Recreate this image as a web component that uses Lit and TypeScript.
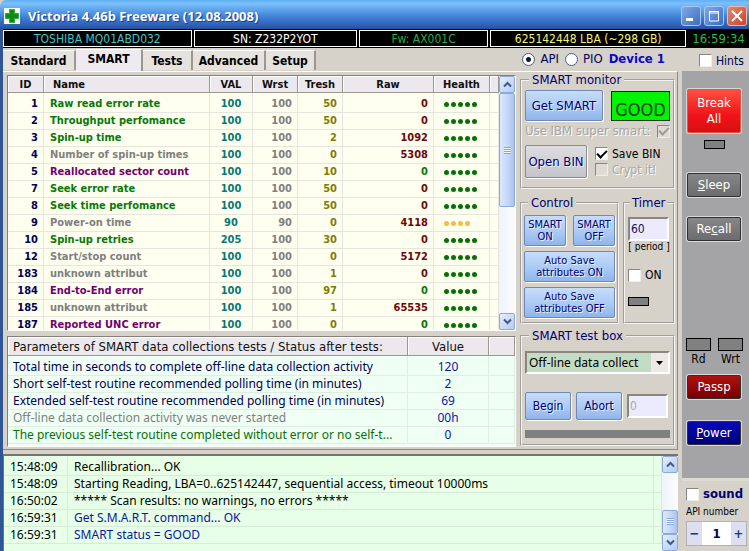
import { LitElement, html, css, svg } from "lit";
import { customElement, property, state } from "lit/decorators.js";
import { classMap } from "lit/directives/class-map.js";

type Tone = "ok" | "info" | "crit";
interface Attr {
  id: number;
  name: string;
  tone: Tone;
  val: number;
  wrst: number;
  tresh: number;
  raw: number;
  calm?: boolean;
  health: number;
}

const a = (id: number, name: string, tone: Tone, val: number, wrst: number, tresh: number, raw: number, calm = false, health = 5): Attr =>
  ({ id, name, tone, val, wrst, tresh, raw, calm, health });

const ATTRS: Attr[] = [
  a(1, "Raw read error rate", "ok", 100, 100, 50, 0),
  a(2, "Throughput perfomance", "ok", 100, 100, 50, 0),
  a(3, "Spin-up time", "ok", 100, 100, 2, 1092),
  a(4, "Number of spin-up times", "info", 100, 100, 0, 5308),
  a(5, "Reallocated sector count", "crit", 100, 100, 10, 0, true),
  a(7, "Seek error rate", "ok", 100, 100, 50, 0),
  a(8, "Seek time perfomance", "ok", 100, 100, 50, 0),
  a(9, "Power-on time", "info", 90, 90, 0, 4118, false, 4),
  a(10, "Spin-up retries", "ok", 205, 100, 30, 0),
  a(12, "Start/stop count", "info", 100, 100, 0, 5172),
  a(183, "unknown attribut", "info", 100, 100, 1, 0),
  a(184, "End-to-End error", "crit", 100, 100, 97, 0, true),
  a(185, "unknown attribut", "info", 100, 100, 1, 65535),
  a(187, "Reported UNC error", "crit", 100, 100, 0, 0, true),
];

const PARAMS = [
  { text: "Total time in seconds to complete off-line data collection activity", value: "120", tone: "navy" },
  { text: "Short self-test routine recommended polling time (in minutes)", value: "2", tone: "navy" },
  { text: "Extended self-test routine recommended polling time (in minutes)", value: "69", tone: "navy" },
  { text: "Off-line data collection activity was never started", value: "00h", tone: "grey" },
  { text: "The previous self-test routine completed without error or no self-t...", value: "0", tone: "green" },
];

const LOG = [
  { time: "15:48:09", text: "Recallibration... OK", note: false },
  { time: "15:48:09", text: "Starting Reading, LBA=0..625142447, sequential access, timeout 10000ms", note: false },
  { time: "16:50:02", text: "***** Scan results: no warnings, no errors *****", note: false },
  { time: "16:59:31", text: "Get S.M.A.R.T. command... OK", note: true },
  { time: "16:59:31", text: "SMART status = GOOD", note: true },
];

const reset = css`
  * { box-sizing: border-box; }
  button, input, select { font: inherit; margin: 0; padding: 0; border-radius: 0; }
`;

@customElement("xp-scrollbar")
class XpScrollbar extends LitElement {
  @property({ type: Number }) before = 0;
  @property({ type: Number }) size = 1;
  @property({ type: Number }) after = 0;

  static styles = [reset, css`
    :host { display: flex; flex-direction: column; width: 16px; background: linear-gradient(90deg, #eef3fd, #fbfcff); }
    .arrow {
      flex: none; display: grid; place-items: center; width: 16px; height: 17px;
      border: 1px solid #8ea9d6; border-radius: 2px;
      background: linear-gradient(135deg, #e4eefd, #b4cbf4);
    }
    .track { flex: 1; min-height: 0; display: flex; flex-direction: column; }
    .thumb {
      display: grid; place-items: center; min-height: 16px;
      border: 1px solid #8ea9d6; border-radius: 2px;
      background: linear-gradient(90deg, #dbe8fd, #c3d6f9 60%, #a9c2f0);
    }
    .grip { width: 7px; height: 7px; background: repeating-linear-gradient(#8ba6d8 0 1px, #eef4ff 1px 2px); }
  `];

  render() {
    const arrow = (d: string) => svg`<path d=${d} fill="none" stroke="#3f5a8c" stroke-width="2" />`;
    return html`
      <button class="arrow" aria-label="Scroll up"><svg width="9" height="7" viewBox="0 0 9 7">${arrow("M1 5.5 4.5 2 8 5.5")}</svg></button>
      <div class="track">
        <div style="flex:${this.before} 1 0"></div>
        <div class="thumb" style="flex:${this.size} 1 0"><span class="grip"></span></div>
        <div style="flex:${this.after} 1 0"></div>
      </div>
      <button class="arrow" aria-label="Scroll down"><svg width="9" height="7" viewBox="0 0 9 7">${arrow("M1 1.5 4.5 5 8 1.5")}</svg></button>
    `;
  }
}

@customElement("app-root")
class AppRoot extends LitElement {
  @state() private tab = "SMART";

  static styles = [reset, css`
    :host {
      display: flex; flex-direction: column; min-width: 700px; height: 100vh; min-height: 551px; overflow: hidden;
      background: #d6d2ca; color: #000;
      font-family: "DejaVu Sans Condensed", "DejaVu Sans", sans-serif; font-size: 12px; line-height: 16px;
    }

    .titlebar {
      flex: none; display: flex; align-items: center; gap: 8px; height: 29px; padding: 2px 2px 0 4px;
      background: linear-gradient(#5fb0f4, #7cc0fa 12%, #62a8ee 30%, #3f7fd4 60%, #2f62b8 85%, #274f9c);
      color: #fff; border-radius: 6px 0 0 0;
    }
    .logo { display: block; }
    .title { flex: 1; margin: 0; font: 700 13px/20px "Noto Sans", sans-serif; text-shadow: 1px 1px #1c3f86; white-space: nowrap; }
    .winbtns { display: flex; gap: 3px; }
    .winbtn {
      display: grid; place-items: center; width: 20px; height: 20px; border: 1px solid #a9c8f2; border-radius: 3px;
      background: linear-gradient(135deg, #7fa9e8, #3b6cc4);
    }
    .winbtn.close { border-color: #f0b9a8; background: linear-gradient(135deg, #e08a72, #c9432a); }

    .window { flex: 1; min-height: 0; display: flex; flex-direction: column; border-left: 3px solid #2f5596; }

    .strip { flex: none; display: flex; gap: 2px; height: 19px; padding: 1px 0; background: #000; }
    .cell { border: 1px solid #fff; text-align: center; line-height: 16px; white-space: nowrap; }
    .model { flex: 189 1 0; color: #46c3c3; }
    .serial { flex: 163 1 0; color: #fff; }
    .firmware { flex: 129 1 0; color: #2fa84a; }
    .size { flex: 196 1 0; color: #f2f27c; }
    .clock { flex: none; width: 61px; border-color: #000; color: #2fb84a; font-size: 13px; }

    .body { flex: 1; min-height: 0; display: flex; }
    .main { flex: 1; min-width: 0; display: flex; flex-direction: column; }

    .topline { flex: none; display: flex; align-items: flex-end; height: 23px; }
    .tab {
      height: 20px; border: 0; border-right: 2px solid #9b978f; background: #e6e2de; margin: 0 0 1px;
      font-weight: 700; font-size: 12px; line-height: 18px; text-align: center; border-top: 1px solid #fff;
    }
    .tab.on { height: 22px; margin: 0; line-height: 16px; padding-bottom: 4px; background: #efeaf0; }
    .w72 { width: 73px; }
    .w66 { width: 67px; }
    .w50 { width: 50px; }
    .port { flex: 1; display: flex; align-items: center; justify-content: flex-end; gap: 6px; height: 22px; padding: 0 13px 2px 0; color: #000058; }
    .port label { display: flex; align-items: center; gap: 5px; font-size: 13px; }
    .device { color: #0a0ac0; font-size: 13px; }
    input[type="radio"] {
      appearance: none; width: 13px; height: 13px; border: 1px solid #45618a; border-radius: 50%; background: #fff;
    }
    input[type="radio"]:checked { background: radial-gradient(#101840 0 2px, #fff 3px); }

    .page {
      flex: 1; min-height: 0; display: flex; gap: 4px; padding: 3px 2px 0 4px;
      border-top: 1px solid #fff; border-right: 1px solid #8d8a84; border-bottom: 1px solid #8d8a84;
    }
    .lists { flex: 1; min-width: 0; display: flex; flex-direction: column; gap: 5px; padding-bottom: 2px; }
    .inset { border: 1px solid #848078; border-right-color: #fff; border-bottom-color: #fff; overflow: hidden; }
    .attrs { flex: 1; min-height: 0; display: flex; background: #fffff0; }
    .attrs table { flex: 1; align-self: flex-start; }
    table { width: 100%; table-layout: fixed; border-collapse: separate; border-spacing: 0; }
    th {
      height: 17px; padding: 0; line-height: 15px; background: #ece9ee; border-right: 1px solid #9c9890;
      border-bottom: 1px solid #9c9890; box-shadow: inset 1px 1px #fff; text-align: center; color: #101010;
    }
    td { padding: 0; line-height: 16px; border-right: 1px solid #e6e6de; border-bottom: 1px solid #e6e6de; white-space: nowrap; overflow: hidden; }
    .attrs td { font-weight: 700; font-size: 11px; }
    .attrs th { font-size: 11px; }
    tbody tr:first-child td { padding-top: 3px; }
    .c-id { width: 36px; }
    .c-val { width: 43px; }
    .c-num { width: 45px; }
    .c-raw { width: 91px; }
    .c-health { width: 56px; }
    .c-pad { width: 9px; }
    .right { text-align: right; padding-right: 5px; }
    .center { text-align: center; }
    th.left { text-align: left; padding-left: 9px; }
    td.left { padding-left: 6px; }
    .id { color: #000058; }
    .ok { color: #087808; }
    .info, .grey { color: #808080; }
    .crit { color: #720072; }
    .val { color: #087878; }
    .tresh { color: #7c7c08; }
    .raw { color: #6c0808; }
    .raw.calm { color: #087808; }
    .dots { display: flex; gap: 2px; padding-left: 10px; }
    .dot { width: 5px; height: 5px; border-radius: 50%; background: #087008; }
    .warn .dot { background: #f8bc40; }

    .params { flex: none; padding-bottom: 2px; background: #f0fff4; }
    .params th { height: 19px; font-weight: 400; font-size: 13px; line-height: 17px; }
    .params td, .log td { font-family: "Noto Sans", sans-serif; font-size: 12px; }
    .params th.left, .params td.left { padding-left: 5px; }
    .params td { border-color: #dfeee4; }
    .c-value { width: 81px; }
    .c-tail { width: 26px; }
    .navy { color: #000050; }
    .num { color: #0818a0; }
    .green { color: #087008; }

    .controls { flex: none; width: 155px; display: flex; flex-direction: column; }
    fieldset { margin: 0; min-width: 0; border: 2px groove #f4f2ee; padding: 0 3px; }
    legend { padding: 0 3px; margin-left: 4px; color: #000070; font-size: 13px; line-height: 14px; }
    .row { display: flex; align-items: center; }
    .between { justify-content: space-between; }
    .btn {
      border: 1px solid #7089b4; border-radius: 2px; color: #000070;
      background: linear-gradient(#c6dcf9, #a8c8f4 60%, #90b4ea);
      box-shadow: 1px 1px #fff; text-shadow: 1px 1px #e8f2ff; white-space: nowrap;
    }
    .btn.plain { border-color: #8a8a90; background: linear-gradient(#dedde2, #c4c4ca); }
    .good {
      width: 59px; height: 30px; border: 1px solid #103010; background: #00f400; color: #003c10;
      font-size: 18px; line-height: 36px; text-align: center;
    }
    .monitor { height: 116px; margin-top: -2px; }
    .get { width: 78px; height: 31px; font-size: 13px; }
    .ibm { display: flex; align-items: center; justify-content: space-between; height: 20px; color: #a8a49c; text-shadow: 1px 1px #fff; font-size: 13px; white-space: nowrap; }
    .monitor .row.first { padding-top: 3px; }
    .openrow { gap: 8px; padding-top: 4px; }
    .open { width: 62px; height: 33px; font-size: 13px; }
    .checks { display: flex; flex-direction: column; }
    .check { display: flex; align-items: center; gap: 4px; font-size: 12px; white-space: nowrap; }
    .check.off { color: #aaa69e; text-shadow: 1px 1px #fff; }
    input[type="checkbox"] {
      appearance: none; flex: none; display: grid; place-items: center; width: 13px; height: 13px;
      background: #fff; border: 1px solid #8a867e; border-right-color: #f0eee8; border-bottom-color: #f0eee8;
    }
    input[type="checkbox"]:disabled { background: #dedad4; }
    input[type="checkbox"]:checked::after {
      content: ""; width: 8px; height: 4px; border: solid #000; border-width: 0 0 2px 2px; transform: translateY(-1px) rotate(-45deg);
    }
    input[type="checkbox"]:disabled:checked::after { border-color: #a09c94; }

    .pair { display: flex; gap: 4px; margin-top: 7px; }
    .control { flex: 1; height: 128px; padding: 0 2px; }
    .timer { flex: none; width: 52px; height: 128px; padding: 0 3px; }
    .timer legend { margin-left: 2px; padding: 0 2px; }
    .stack { display: flex; flex-direction: column; gap: 5px; padding-top: 5px; }
    .small { height: 31px; font-size: 11px; line-height: 12px; }
    .half { width: 42px; }
    .field {
      width: 41px; height: 24px; padding-left: 1px; border: 2px solid #8a867e; border-right-color: #fff; border-bottom-color: #fff;
      background: #ecebfd; color: #101060; font-size: 12px;
    }
    .field:disabled { color: #a8a8b8; }
    .tick { display: flex; flex-direction: column; padding-top: 7px; }
    .period { font-size: 10px; line-height: 12px; text-align: center; white-space: nowrap; }
    .tick .check { padding-top: 14px; }
    .led { width: 21px; height: 9px; border: 1px solid #000; background: #808080; }
    .tick .led { margin-top: 14px; }

    .test { height: 117px; margin-top: 5px; }
    .test select {
      appearance: none; display: block; width: 100%; height: 23px; padding: 0 18px 0 2px; font: 12px/16px "Noto Sans", sans-serif;
      border: 2px solid #8a867e; border-right-color: #fff; border-bottom-color: #fff; color: #000;
      background: linear-gradient(#ece9e4, #ece9e4) right / 17px 100% no-repeat #c4dcc4;
    }
    .combo { display: grid; margin-top: 8px; }
    .combo > * { grid-area: 1 / 1; }
    .combo svg { justify-self: end; align-self: center; margin-right: 7px; pointer-events: none; }
    .runrow { gap: 5px; padding-top: 18px; }
    .run { width: 46px; height: 28px; font-size: 12px; }
    .progress { height: 8px; margin-top: 10px; background: #808080; }

    .log { flex: none; display: flex; height: 97px; margin-top: 4px; background: #e6ffe6; border: solid #77746e; border-width: 2px 0 0 1px; overflow: hidden; }
    .log table { flex: 1; align-self: flex-start; }
    .log td { border-color: #d6ecd8; }
    .c-time { width: 64px; }
    .c-end { width: 8px; }
    .log .time { padding-left: 6px; }
    .log .note { color: #0818a0; }

    .side { flex: none; width: 70px; display: flex; flex-direction: column; margin-left: 1px; }
    .hints { height: 23px; padding: 2px 0 0 20px; font-size: 12px; color: #000058; }
    .rail { flex: 1; display: flex; flex-direction: column; align-items: flex-start; margin-left: 3px; padding: 18px 0 0 5px; background: #a4a4a6; }
    .key {
      width: 54px; height: 24px; border: 1px solid #303030; border-radius: 2px; color: #fff; box-shadow: 0 0 0 1px #d8d8d8;
      background: linear-gradient(#868688, #6c6c70); font-size: 13px;
    }
    .break { height: 44px; background: linear-gradient(#ff5040, #f01418 60%, #d81010); border-color: #e85048; line-height: 16px; }
    .beacon { margin: 7px 0 24px 17px; }
    .recall { margin: 20px 0 97px; }
    .lamps { display: flex; gap: 7px; margin-left: -1px; }
    .lamp { display: flex; flex-direction: column; align-items: center; width: 25px; font-size: 12px; line-height: 16px; }
    .lamp .led { width: 25px; height: 13px; }
    .pass { margin: 8px 0 22px; background: linear-gradient(#b01010, #780000); }
    .power { background: linear-gradient(#0808b8, #000078); }
    .api { flex: none; height: 73px; margin-left: 3px; padding: 5px 2px 0 4px; border-top: 3px solid #dedbd4; }
    .sound { font-weight: 700; font-size: 13px; color: #000070; }
    .apilabel { display: block; font-size: 10px; line-height: 16px; padding-top: 2px; white-space: nowrap; }
    .spin { display: flex; height: 25px; margin-top: 1px; border: 1px solid #b4b2b0; background: #fff; }
    .spin button { width: 15px; border: 0; background: #dcdff0; color: #103c80; font-weight: 700; font-size: 13px; }
    .spin input { flex: 1; width: 0; min-width: 0; border: 0; text-align: center; color: #000060; font-weight: 700; font-size: 13px; background: #fff; }
  `];

  private tabButton(name: string, width: string) {
    return html`<button role="tab" aria-selected=${this.tab === name}
      class=${classMap({ tab: true, on: this.tab === name, [width]: true })}
      @click=${() => (this.tab = name)}>${name}</button>`;
  }

  private attrRow(r: Attr) {
    return html`<tr>
      <td class="right id">${r.id}</td>
      <td class="left ${r.tone}">${r.name}</td>
      <td class="center val">${r.val}</td>
      <td class="right info">${r.wrst}</td>
      <td class="right tresh">${r.tresh}</td>
      <td class=${classMap({ right: true, raw: true, calm: !!r.calm })}>${r.raw}</td>
      <td><div class=${classMap({ dots: true, warn: r.health < 5 })}>${Array.from({ length: r.health }, () => html`<span class="dot"></span>`)}</div></td>
      <td></td>
    </tr>`;
  }

  render() {
    return html`
      <header class="titlebar">
        <svg class="logo" width="16" height="16" viewBox="0 0 16 16"><rect width="16" height="16" fill="#f4fbf0" /><path d="M5.5 1.5h5v4h4v5h-4v4h-5v-4h-4v-5h4z" fill="#0c8c14" stroke="#3aa83c" /></svg>
        <h1 class="title">Victoria 4.46b Freeware (12.08.2008)</h1>
        <div class="winbtns">
          <button class="winbtn" aria-label="Minimize"><svg width="12" height="12"><rect x="1" y="8" width="7" height="3" fill="#fff" /></svg></button>
          <button class="winbtn" aria-label="Maximize"><svg width="12" height="12"><path d="M1 1.5h10M1.5 1v10h9V1M1 3h10" fill="none" stroke="#fff" /></svg></button>
          <button class="winbtn close" aria-label="Close"><svg width="12" height="12"><path d="M1 1l10 10M11 1 1 11" stroke="#fff" stroke-width="2" /></svg></button>
        </div>
      </header>
      <div class="window">
        <div class="strip">
          <div class="cell model">TOSHIBA MQ01ABD032</div>
          <div class="cell serial">SN: Z232P2YOT</div>
          <div class="cell firmware">Fw: AX001C</div>
          <div class="cell size">625142448 LBA (~298 GB)</div>
          <div class="cell clock">16:59:34</div>
        </div>
        <div class="body">
          <main class="main">
            <div class="topline" role="tablist">
              ${this.tabButton("Standard", "w72")}
              ${this.tabButton("SMART", "w66")}
              ${this.tabButton("Tests", "w50")}
              ${this.tabButton("Advanced", "w72")}
              ${this.tabButton("Setup", "w50")}
              <div class="port">
                <label><input type="radio" name="port" checked />API</label>
                <label><input type="radio" name="port" />PIO</label>
                <strong class="device">Device 1</strong>
              </div>
            </div>
            <section class="page">
              <div class="lists">
                <div class="inset attrs">
                  <table>
                    <colgroup>
                      <col class="c-id" /><col /><col class="c-val" /><col class="c-num" /><col class="c-num" />
                      <col class="c-raw" /><col class="c-health" /><col class="c-pad" />
                    </colgroup>
                    <thead><tr><th>ID</th><th class="left">Name</th><th>VAL</th><th>Wrst</th><th>Tresh</th><th>Raw</th><th>Health</th><th></th></tr></thead>
                    <tbody>${ATTRS.map((r) => this.attrRow(r))}</tbody>
                  </table>
                  <xp-scrollbar .before=${0} .size=${114} .after=${107}></xp-scrollbar>
                </div>
                <div class="inset params">
                  <table>
                    <colgroup><col /><col class="c-value" /><col class="c-tail" /></colgroup>
                    <thead><tr><th class="left">Parameters of SMART data collections tests / Status after tests:</th><th>Value</th><th></th></tr></thead>
                    <tbody>${PARAMS.map((p) => html`<tr><td class="left ${p.tone}">${p.text}</td><td class="center num">${p.value}</td><td></td></tr>`)}</tbody>
                  </table>
                </div>
              </div>
              <div class="controls">
                <fieldset class="monitor">
                  <legend>SMART monitor</legend>
                  <div class="row between first"><button class="btn get">Get SMART</button><output class="good">GOOD</output></div>
                  <label class="ibm">Use IBM super smart:<input type="checkbox" checked disabled /></label>
                  <div class="row openrow">
                    <button class="btn plain open">Open BIN</button>
                    <div class="checks">
                      <label class="check"><input type="checkbox" checked />Save BIN</label>
                      <label class="check off"><input type="checkbox" disabled />Crypt it!</label>
                    </div>
                  </div>
                </fieldset>
                <div class="pair">
                  <fieldset class="control">
                    <legend>Control</legend>
                    <div class="stack">
                      <div class="row between"><button class="btn small half">SMART<br />ON</button><button class="btn small half">SMART<br />OFF</button></div>
                      <button class="btn small">Auto Save<br />attributes ON</button>
                      <button class="btn small">Auto Save<br />attributes OFF</button>
                    </div>
                  </fieldset>
                  <fieldset class="timer">
                    <legend>Timer</legend>
                    <div class="tick">
                      <input class="field" id="period" value="60" />
                      <label class="period" for="period">[ period ]</label>
                      <label class="check"><input type="checkbox" />ON</label>
                      <span class="led"></span>
                    </div>
                  </fieldset>
                </div>
                <fieldset class="test">
                  <legend>SMART test box</legend>
                  <div class="combo">
                    <select aria-label="Test"><option>Off-line data collect</option></select>
                    <svg width="7" height="4" viewBox="0 0 7 4"><path d="M0 0h7L3.500 4z" /></svg>
                  </div>
                  <div class="row runrow">
                    <button class="btn run">Begin</button>
                    <button class="btn run">Abort</button>
                    <input class="field" value="0" aria-label="Result" disabled />
                  </div>
                  <div class="progress"></div>
                </fieldset>
              </div>
            </section>
            <div class="log">
              <table>
                <colgroup><col class="c-time" /><col /><col class="c-end" /></colgroup>
                <tbody>${LOG.map((l) => html`<tr><td class="time">${l.time}</td><td class=${classMap({ left: true, note: l.note })}>${l.text}</td><td></td></tr>`)}</tbody>
              </table>
              <xp-scrollbar .before=${38} .size=${23} .after=${0}></xp-scrollbar>
            </div>
          </main>
          <aside class="side">
            <label class="check hints"><input type="checkbox" />Hints</label>
            <div class="rail">
              <button class="key break">Break<br />All</button>
              <span class="led beacon"></span>
              <button class="key"><u>S</u>leep</button>
              <button class="key recall">Re<u>c</u>all</button>
              <div class="lamps">
                <div class="lamp"><span class="led"></span>Rd</div>
                <div class="lamp"><span class="led"></span>Wrt</div>
              </div>
              <button class="key pass">Passp</button>
              <button class="key power"><u>P</u>ower</button>
            </div>
            <div class="api">
              <label class="check sound"><input type="checkbox" />sound</label>
              <label class="apilabel" for="api">API number</label>
              <div class="spin">
                <button aria-label="Decrease">−</button><input id="api" value="1" /><button aria-label="Increase">+</button>
              </div>
            </div>
          </aside>
        </div>
      </div>
    `;
  }
}
